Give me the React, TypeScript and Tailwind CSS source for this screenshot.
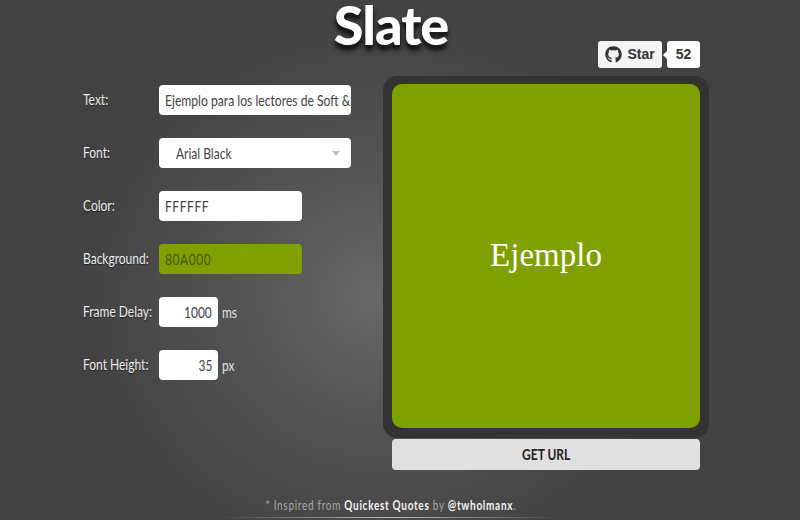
import React from "react";
import { FaGithub } from "react-icons/fa";

const squeeze = "inline-block whitespace-nowrap scale-x-[.8] origin-left";

const Row = ({ label, children }: { label: string; children: React.ReactNode }) => (
  <div className="flex items-center h-[30px]">
    <span className="w-[76px] shrink-0 pb-[2px] text-[15px] text-[#ececec] [text-shadow:0_1px_1px_rgba(0,0,0,0.5)]">
      <span className={squeeze}>{label}</span>
    </span>
    {children}
  </div>
);

const inputBox = "h-[30px] rounded-[4px] bg-white flex items-center text-[15px] text-[#444]";

export default function App() {
  return (
    <div className="w-[800px] h-[520px] overflow-hidden flex flex-col bg-[#414141] bg-[radial-gradient(ellipse_300px_280px_at_380px_295px,#686868_0%,#565656_40%,#424242_100%)] font-['Lato',sans-serif]">
      <header className="h-[76px] shrink-0 grid grid-cols-[1fr_auto_1fr]">
        <div />
        <h1 className="-mt-[4px] ml-[-18px] text-[54px] leading-[58px] font-black tracking-[-1px] text-white [text-shadow:0_2px_1px_#1c1c1c,0_5px_5px_rgba(0,0,0,0.9)]">Slate</h1>
        <div className="flex justify-end items-start pt-[41px] pr-[100px]">
          <div className="flex items-center font-['Liberation_Sans',sans-serif] font-bold text-[14px] text-[#333]">
            <div className="h-[27px] w-[64px] rounded-[3px] bg-[#f4f4f4] flex items-center justify-center gap-[5px]">
              <FaGithub className="w-[17px] h-[17px] text-[#333]" />
              <span>Star</span>
            </div>
            <div className="relative ml-[5px] h-[27px] w-[33px] rounded-[3px] bg-white flex items-center justify-center">
              <span className="absolute left-[-4px] top-[10px] w-0 h-0 border-y-[4px] border-y-transparent border-r-[4px] border-r-white" />
              52
            </div>
          </div>
        </div>
      </header>

      <main className="flex flex-1 min-h-0">
        <section className="w-[383px] shrink-0 pl-[83px] pt-[9px] flex flex-col gap-[23px]">
          <Row label="Text:">
            <div className={`${inputBox} w-[192px] px-[6px] overflow-hidden text-[#333]`}>
              <span className="inline-block whitespace-nowrap scale-x-[.81] origin-left">Ejemplo para los lectores de Soft &amp;</span>
            </div>
          </Row>
          <Row label="Font:">
            <div className={`${inputBox} w-[192px] pl-[17px] pr-[11px] justify-between`}>
              <span className={squeeze}>Arial Black</span>
              <span className="w-0 h-0 border-x-[4px] border-x-transparent border-t-[5px] border-t-[#bbb]" />
            </div>
          </Row>
          <Row label="Color:">
            <div className={`${inputBox} w-[143px] px-[6px] tracking-[0.7px]`}>
              <span className={squeeze}>FFFFFF</span>
            </div>
          </Row>
          <Row label="Background:">
            <div className="h-[30px] w-[143px] rounded-[4px] bg-[#80a000] flex items-center px-[6px] text-[15px] tracking-[0.7px] text-[#465800]">
              <span className={squeeze}>80A000</span>
            </div>
          </Row>
          <Row label="Frame Delay:">
            <div className={`${inputBox} w-[59px] px-[6px] justify-end`}>
              <span className="inline-block scale-x-[.8] origin-right">1000</span>
            </div>
            <span className="ml-[4px] text-[15px] text-[#e0e0e0]"><span className={squeeze}>ms</span></span>
          </Row>
          <Row label="Font Height:">
            <div className={`${inputBox} w-[59px] px-[6px] justify-end`}>
              <span className="inline-block scale-x-[.8] origin-right">35</span>
            </div>
            <span className="ml-[4px] text-[15px] text-[#e0e0e0]"><span className={squeeze}>px</span></span>
          </Row>
        </section>

        <section className="w-[326px] shrink-0 flex flex-col">
          <div className="h-[362px] rounded-[14px] bg-[#333333] pt-[8px] pb-[10px] px-[9px]">
            <div className="w-full h-full rounded-[10px] bg-[#80a000] flex items-center justify-center">
              <span className="font-['Liberation_Serif',serif] text-[33px] text-white">Ejemplo</span>
            </div>
          </div>
          <div className="mx-[9px] mt-[1px] h-[31px] rounded-[4px] bg-[#e0e0e0] flex items-center justify-center text-[15px] font-bold text-[#222]">
            <span className="inline-block scale-x-[.8]">GET URL</span>
          </div>
        </section>
      </main>

      <footer className="h-[50px] shrink-0 flex flex-col items-center">
        <p className="mt-[28px] ml-[-18px] text-[13px] leading-[14px] tracking-[0.9px] text-[#a4a4a4] whitespace-nowrap scale-x-[.77]">
          * Inspired from <span className="font-bold text-[#f2f2f2]">Quickest Quotes</span> by <span className="font-bold text-[#f2f2f2]">@twholmanx</span>.
        </p>
        <div className="mt-[5px] ml-[-18px] h-px w-[340px] bg-[linear-gradient(90deg,transparent,#bbb_50%,transparent)]" />
      </footer>
    </div>
  );
}
